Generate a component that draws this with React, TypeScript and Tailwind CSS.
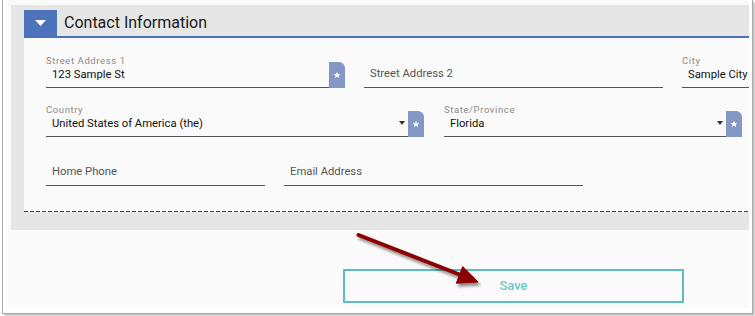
import React from "react";

const Badge = () => (
  <div className="w-[16px] h-[26px] bg-[#8597c5] rounded-tr-[6px] flex items-center justify-center shrink-0">
    <svg width="8" height="8" viewBox="0 0 24 24">
      <path d="M12 2l2.9 6.9 7.1.6-5.4 4.7 1.7 7.1L12 17.5 5.7 21.3l1.7-7.1L2 9.5l7.1-.6z" fill="#ffffff" />
    </svg>
  </div>
);

const Caret = () => (
  <svg width="6" height="4" viewBox="0 0 6 4" className="absolute right-[3px] top-[17px]">
    <path d="M0 0h6L3 4z" fill="#333333" />
  </svg>
);

type FieldProps = {
  label?: string;
  value?: string;
  placeholder?: string;
  select?: boolean;
  required?: boolean;
  widthClass: string;
};

const Field = ({ label, value, placeholder, select, required, widthClass }: FieldProps) => (
  <div className="flex items-end shrink-0">
    <div className={`${widthClass} relative border-b border-[#555]`}>
      <div className="h-[11px] text-[9.5px] leading-[11px] tracking-[0.6px] text-[#8a8a8a] whitespace-nowrap">{label ?? ""}</div>
      {value ? (
        <div className="h-[17px] pl-[6px] text-[11.25px] leading-[17px] text-[#111] whitespace-nowrap">{value}</div>
      ) : (
        <div className="h-[17px] pl-[6px] text-[11.25px] leading-[15px] text-[#555] whitespace-nowrap">{placeholder}</div>
      )}
      <div className="h-[4px]" />
      {select && <Caret />}
    </div>
    {required && <Badge />}
  </div>
);

export default function App() {
  return (
    <div className="w-[755px] h-[316px] bg-white overflow-hidden font-['Roboto',sans-serif]">
      <div className="ml-[2px] w-[751px] h-[314px] border-l border-r border-b border-[#a9a9a9] shadow-[2px_2px_2px_rgba(0,0,0,0.25)] bg-white pl-[4px] pr-[3px] pb-[5px]">
        <div className="bg-[#fafafa] h-full pl-[4px] pt-[5px] relative">
          <div className="bg-[#e6e6e6] pl-[13px] pt-[5px] pb-[18px]">
            <div className="flex h-[26px] items-stretch">
              <div className="w-[33px] bg-[#4d73ba] flex items-center justify-center">
                <svg width="11" height="6" viewBox="0 0 11 6">
                  <path d="M0 0h11L5.5 6z" fill="#ffffff" />
                </svg>
              </div>
              <div className="ml-[7px] text-[16px] leading-[26px] text-[#1a1a1a]">Contact Information</div>
            </div>
            <div className="h-[2px] bg-[#4a71b7]" />
            <div className="bg-[#fafafa] overflow-hidden">
              <div className="pl-[22px] pt-[17px] pb-[25px] flex flex-col gap-[16px]">
                <div className="flex gap-[19px]">
                  <Field widthClass="w-[283px]" label="Street Address 1" value="123 Sample St" required />
                  <Field widthClass="w-[299px]" placeholder="Street Address 2" />
                  <Field widthClass="w-[299px]" label="City" value="Sample City" />
                </div>
                <div className="flex gap-[20px]">
                  <Field widthClass="w-[362px]" label="Country" value="United States of America (the)" select required />
                  <Field widthClass="w-[282px]" label="State/Province" value="Florida" select required />
                </div>
                <div className="flex gap-[19px]">
                  <Field widthClass="w-[219px]" placeholder="Home Phone" />
                  <Field widthClass="w-[299px]" placeholder="Email Address" />
                </div>
              </div>
              <div className="h-px bg-[repeating-linear-gradient(to_right,#444_0_4px,transparent_4px_6px)]" />
            </div>
          </div>
          <div className="pl-[332px] pt-[39px]">
            <button className="w-[341px] h-[34px] border-2 border-[#5dbfba] bg-transparent text-[#6fc9c4] text-[13px] font-medium flex items-center justify-center">
              Save
            </button>
          </div>
          <svg className="absolute left-0 top-0 pointer-events-none" width="748" height="308" viewBox="7 0 748 308">
            <defs>
              <filter id="sh" x="-20%" y="-50%" width="140%" height="200%">
                <feGaussianBlur in="SourceAlpha" stdDeviation="1.5" />
                <feOffset dx="2" dy="3" result="b" />
                <feComponentTransfer>
                  <feFuncA type="linear" slope="0.45" />
                </feComponentTransfer>
                <feMerge>
                  <feMergeNode />
                  <feMergeNode in="SourceGraphic" />
                </feMerge>
              </filter>
            </defs>
            <g filter="url(#sh)">
              <line x1="358.5" y1="235" x2="462" y2="275.5" stroke="#8c0000" strokeWidth="4" strokeLinecap="round" />
              <path d="M478 282 L462.7 266.5 L456.3 283.2 Z" fill="#8c0000" stroke="#8c0000" strokeWidth="1" strokeLinejoin="round" />
            </g>
          </svg>
        </div>
      </div>
    </div>
  );
}
